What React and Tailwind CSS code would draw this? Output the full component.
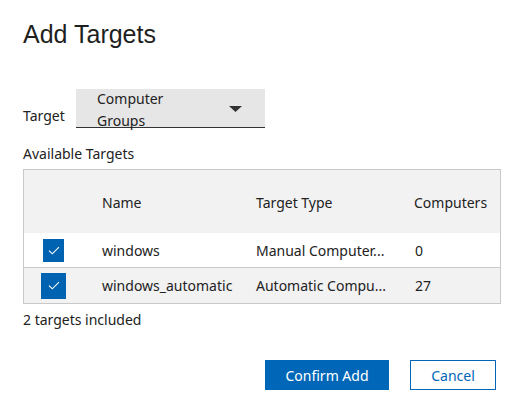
import { useState } from "react";

const rows = [
  { name: "windows", type: "Manual Computer...", count: "0", hover: false },
  { name: "windows_automatic", type: "Automatic Compu...", count: "27", hover: true },
];

function Check({ big }) {
  return (
    <div
      className={
        big
          ? "ml-[17px] w-[25px] h-[26px] bg-[#0063b1] flex items-center justify-center"
          : "ml-[19px] w-[21px] h-[23px] bg-[#0063b1] flex items-center justify-center"
      }
    >
      <svg width="12" height="9" viewBox="0 0 12 9" fill="none">
        <path d="M1 4.6 L4.3 7.8 L11 1.2" stroke="white" strokeWidth="1.1" />
      </svg>
    </div>
  );
}

export default function App() {
  const [target] = useState("Computer Groups");

  return (
    <div
      className="w-[527px] h-[407px] bg-white text-[#222] pl-[23px] pt-[19px] overflow-hidden"
      style={{ fontFamily: '"Noto Sans", sans-serif' }}
    >
      <h1
        className="text-[25px] leading-[30px] text-[#1f1f1f]"
        style={{ fontFamily: '"Liberation Sans", Arial, sans-serif' }}
      >
        Add Targets
      </h1>

      {/* target select */}
      <div className="mt-[40px] flex items-center">
        <span className="text-[14px] pt-[13px] w-[53px]">Target</span>
        <div className="w-[189px] h-[39px] bg-[#e6e6e6] border-b border-[#333] flex items-start">
          <span className="pl-[21px] w-[120px] text-[14px] leading-[22px] -mt-[1px]">
            {target}
          </span>
          <svg className="ml-[33px] mt-[17px]" width="13" height="6" viewBox="0 0 13 6">
            <path d="M0 0 H13 L6.5 6 Z" fill="#333" />
          </svg>
        </div>
      </div>

      <div className="mt-[16px] text-[14px] leading-[20px]">Available Targets</div>

      {/* table */}
      <div className="mt-[5px] w-[478px] border border-[#c8c8c8] text-[14px]">
        <div className="h-[63px] bg-[#f2f2f2] grid grid-cols-[78px_154px_158px_1fr] items-center pt-[1px]">
          <span />
          <span>Name</span>
          <span>Target Type</span>
          <span>Computers</span>
        </div>
        {rows.map((r) => (
          <div
            key={r.name}
            className={
              r.hover
                ? "h-[35px] bg-[#f2f2f2] grid grid-cols-[78px_154px_158px_1fr] items-center"
                : "h-[35px] bg-white border-b border-[#c8c8c8] grid grid-cols-[78px_154px_158px_1fr] items-center"
            }
          >
            <Check big={r.hover} />
            <span className="whitespace-nowrap">{r.name}</span>
            <span className="whitespace-nowrap">{r.type}</span>
            <span className="pl-[1px]">{r.count}</span>
          </div>
        ))}
      </div>

      <div className="mt-[6px] text-[14px] leading-[20px]">2 targets included</div>

      <div className="mt-[30px] flex pl-[242px] gap-[21px]">
        <button className="w-[124px] h-[30px] bg-[#0067b8] text-white text-[14px]">
          Confirm Add
        </button>
        <button className="w-[86px] h-[30px] border border-[#0067b8] text-[#0067b8] text-[14px] bg-white">
          Cancel
        </button>
      </div>
    </div>
  );
}
